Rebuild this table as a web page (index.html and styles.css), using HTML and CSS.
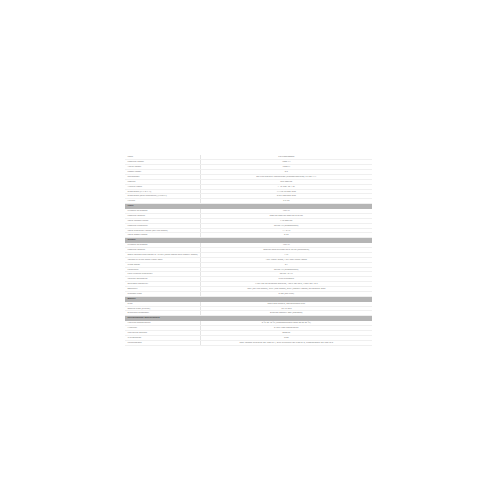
FILE: index.html
```
<!DOCTYPE html>
<html>
<head>
<meta charset="utf-8">
<link rel="stylesheet" href="styles.css">
</head>
<body>
<div class="page">
<table class="specs">
<tbody>
<tr><td class="k">Code</td><td class="v">PS1K0RT00000</td></tr>
<tr><td class="k">Nominal Power</td><td class="v">1000 VA</td></tr>
<tr><td class="k">Active Power</td><td class="v">1000 W</td></tr>
<tr><td class="k">Power factor</td><td class="v">0.9</td></tr>
<tr><td class="k">Technology</td><td class="v">On Line Double Conversion (transformerless) VFI-SS-111</td></tr>
<tr><td class="k">Cooling</td><td class="v">Fan cooling</td></tr>
<tr><td class="k">Audible noise</td><td class="v">&lt; 45 dBA at 1 m</td></tr>
<tr><td class="k">Dimension (W x D x H)</td><td class="v">144x345x225 mm</td></tr>
<tr><td class="k">Dimension (with packaging) (WxDxH)</td><td class="v">240x480x350 mm</td></tr>
<tr><td class="k">Weight</td><td class="v">9.7 kg</td></tr>
<tr class="h"><td colspan="2">Input</td></tr>
<tr><td class="k">Number of phases</td><td class="v">1Ph+N</td></tr>
<tr><td class="k">Nominal voltage</td><td class="v">208Vac/220Vac/230Vac/240Vac</td></tr>
<tr><td class="k">Input voltage range</td><td class="v">110-300Vac</td></tr>
<tr><td class="k">Nominal frequency</td><td class="v">50/60 Hz (autosensing)</td></tr>
<tr><td class="k">Input frequency range (On line mode)</td><td class="v">+/- 5 Hz</td></tr>
<tr><td class="k">Input power factor</td><td class="v">0.99</td></tr>
<tr class="h"><td colspan="2">Output</td></tr>
<tr><td class="k">Number of phases</td><td class="v">1Ph+N</td></tr>
<tr><td class="k">Nominal voltage</td><td class="v">208Vac/220Vac/230Vac/240Vac (selectable)</td></tr>
<tr><td class="k">Static voltage Regulation in AC/DC (main mode and battery mode)</td><td class="v">±1%</td></tr>
<tr><td class="k">Voltage THD on rated linear load</td><td class="v">&lt;2% linear loads; &lt;5% non-linear loads</td></tr>
<tr><td class="k">Crest factor</td><td class="v">3:1</td></tr>
<tr><td class="k">Frequency</td><td class="v">50/60 Hz (autosensing)</td></tr>
<tr><td class="k">Free running frequency</td><td class="v">50/60 ±0.1%</td></tr>
<tr><td class="k">Inverter waveform</td><td class="v">Pure sinewave</td></tr>
<tr><td class="k">Overload capability</td><td class="v">110% for 60 seconds warning; 125% for 30 s; 150% for 10 s</td></tr>
<tr><td class="k">Efficiency</td><td class="v">90% (on line mode), 95% (eco mode), 85% (battery mode) at nominal load</td></tr>
<tr><td class="k">Transfer time</td><td class="v">0 ms (On Line)</td></tr>
<tr class="h"><td colspan="2">Battery</td></tr>
<tr><td class="k">Type</td><td class="v">Lead acid sealed, maintenance free</td></tr>
<tr><td class="k">Backup time (Typical)</td><td class="v">10-15 min</td></tr>
<tr><td class="k">Extended autonomy</td><td class="v">External Battery Box (optional)</td></tr>
<tr class="h"><td colspan="2">Environmental specifications</td></tr>
<tr><td class="k">Working temperature</td><td class="v">0 ºC to 40 ºC (recommended from 20 to 25 ºC)</td></tr>
<tr><td class="k">Humidity</td><td class="v">0-95% non condensing</td></tr>
<tr><td class="k">Maximum altitude</td><td class="v">3000 m</td></tr>
<tr><td class="k">IP protection</td><td class="v">IP20</td></tr>
<tr><td class="k">Certifications</td><td class="v">Low Voltage Directive IEC 62040-1; EMC Directive IEC 62040-2; Classification IEC 62040-3</td></tr>
</tbody>
</table>
</div>
</body>
</html>
```
FILE: styles.css
```
html, body {
  margin: 0;
  padding: 0;
  background: #ffffff;
}
.page {
  padding: 155px 0 0 125px;
}
.specs {
  width: 247px;
  border-collapse: collapse;
  table-layout: fixed;
  font-family: "Open Sans", "Liberation Sans", sans-serif;
  font-size: 2.3px;
  color: #707070;
}
.specs td {
  height: 4.87px;
  line-height: 3.87px;
  padding: 0 2.5px;
  border-bottom: 1px solid #efefef;
  white-space: nowrap;
  box-sizing: border-box;
}
.specs td.k {
  width: 75px;
  border-right: 1px solid #e4e4e4;
}
.specs td.v {
  text-align: center;
}
.specs tr.h td {
  background: #b5b5b5;
  color: #3a3a3a;
  font-weight: 600;
  border-bottom: 1px solid #b5b5b5;
}
```
